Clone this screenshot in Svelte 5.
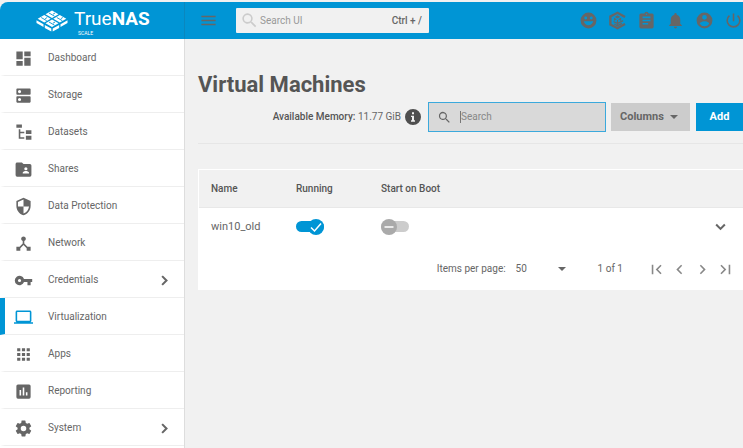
<script>
  const menu = [
    {
      name: 'Dashboard',
      icon: 'M13 3v6h8V3m-8 18h8V11h-8M3 21h8v-6H3m0-2h8V3H3v10z'
    },
    {
      name: 'Storage',
      icon: 'M20 13H4c-.55 0-1 .45-1 1v6c0 .55.45 1 1 1h16c.55 0 1-.45 1-1v-6c0-.55-.45-1-1-1zM7 19a2 2 0 1 1 0-4 2 2 0 0 1 0 4zM20 3H4c-.55 0-1 .45-1 1v6c0 .55.45 1 1 1h16c.55 0 1-.45 1-1V4c0-.55-.45-1-1-1zM7 9a2 2 0 1 1 0-4 2 2 0 0 1 0 4z'
    },
    {
      name: 'Datasets',
      icon: 'M3 2h7v4H3V2m12 7h7v5h-7V9m0 7h7v5h-7v-5m-2-3H8v5h5v2H6V8h2v3h5v2z'
    },
    {
      name: 'Shares',
      icon: 'M20 5h-8l-2-2H4c-1.100 0-2 .9-2 2v14a2 2 0 0 0 2 2h16a2 2 0 0 0 2-2V7a2 2 0 0 0-2-2zm-5 4a2 2 0 1 1 0 4 2 2 0 0 1 0-4zm4 8h-8v-1c0-1.330 2.670-2 4-2s4 .67 4 2v1z'
    },
    {
      name: 'Data Protection',
      icon: 'M12 1L3 5v6c0 5.550 3.840 10.740 9 12 5.160-1.260 9-6.450 9-12V5l-9-4zm0 10.990h7c-.53 4.120-3.280 7.790-7 8.940V12H5V6.300l7-3.110v8.800z'
    },
    {
      name: 'Network',
      icon: 'M17 16l-4-4V8.820A3 3 0 0 0 12 3a3 3 0 0 0-1 5.820V12l-4 4H3v5h5v-3.050l4-4.200 4 4.200V21h5v-5h-4z'
    },
    {
      name: 'Credentials',
      icon: 'M12.650 10A6 6 0 1 0 12.650 14H17v4h4v-4h2v-4H12.650zM7 14a2 2 0 1 1 0-4 2 2 0 0 1 0 4z',
      children: true
    },
    {
      name: 'Virtualization',
      icon: 'M20 18c1.100 0 1.990-.9 1.990-2L22 5c0-1.100-.9-2-2-2H4c-1.100 0-2 .9-2 2v11c0 1.100.9 2 2 2H0v2h24v-2h-4zM4 5h16v11H4V5z',
      active: true
    },
    {
      name: 'Apps',
      icon: 'M4 8h4V4H4v4zm6 12h4v-4h-4v4zm-6 0h4v-4H4v4zm0-6h4v-4H4v4zm6 0h4v-4h-4v4zm6-10v4h4V4h-4zm-6 4h4V4h-4v4zm6 6h4v-4h-4v4zm0 6h4v-4h-4v4z'
    },
    {
      name: 'Reporting',
      icon: 'M19 3H5a2 2 0 0 0-2 2v14a2 2 0 0 0 2 2h14a2 2 0 0 0 2-2V5a2 2 0 0 0-2-2zM9 17H7v-7h2v7zm4 0h-2V7h2v10zm4 0h-2v-4h2v4z'
    },
    {
      name: 'System',
      icon: 'M19.430 12.980c.04-.32.07-.64.07-.98s-.03-.66-.07-.98l2.110-1.650c.19-.15.24-.42.12-.64l-2-3.460c-.12-.22-.39-.3-.61-.22l-2.490 1c-.52-.4-1.080-.73-1.690-.98l-.38-2.650A.49.49 0 0 0 14 2h-4c-.25 0-.46.18-.49.42l-.38 2.650c-.61.25-1.170.59-1.690.98l-2.490-1c-.23-.09-.49 0-.61.22l-2 3.460c-.13.22-.07.49.12.64l2.110 1.650c-.04.32-.07.65-.07.98s.03.66.07.98l-2.110 1.650c-.19.15-.24.42-.12.64l2 3.460c.12.22.39.3.61.22l2.490-1c.52.4 1.080.73 1.690.98l.38 2.650c.03.24.24.42.49.42h4c.25 0 .46-.18.49-.42l.38-2.650c.61-.25 1.170-.59 1.690-.98l2.490 1c.23.09.49 0 .61-.22l2-3.460c.12-.22.07-.49-.12-.64l-2.110-1.650zM12 15.500a3.500 3.500 0 1 1 0-7 3.500 3.500 0 0 1 0 7z',
      children: true
    }
  ];

  const pager = [
    {label: 'First page', icon: 'M18.410 16.590L13.820 12l4.590-4.590L17 6l-6 6 6 6zM6 6h2v12H6z'},
    {label: 'Previous page', icon: 'M15.410 7.410L14 6l-6 6 6 6 1.410-1.410L10.830 12z'},
    {label: 'Next page', icon: 'M10 6L8.590 7.410 13.170 12l-4.580 4.590L10 18l6-6z'},
    {label: 'Last page', icon: 'M5.590 7.410L10.180 12l-4.590 4.590L7 18l6-6-6-6zM16 6h2v12h-2z'}
  ];

  let machines = $state([{name: 'win10_old', running: true, autostart: false}]);
  let filter = $state('');
  let pageSize = $state('50');
</script>

<div class="app">
  <header class="topbar">
    <a class="brand" href="#dashboard" aria-label="TrueNAS Scale">
      <svg class="logo" viewBox="0 0 32 22">
        <path class="tile" d="M16 .5l6.500 3.700L16 7.900 9.500 4.200zM8.200 5l6.500 3.700-6.500 3.700-6.500-3.700zM23.800 5l6.500 3.700-6.500 3.700-6.500-3.700zM16 9.500l6.500 3.700-6.500 3.700-6.500-3.700z" />
        <path class="cut" d="M13 3l5.500 3.200M19 3l-2 1.200M5.200 7.500l5.500 3.200M11.200 7.500l-2 1.200M20.800 7.500l5.500 3.200M26.800 7.500l-2 1.200M13 12l5.500 3.200M19 12l-2 1.200" />
        <path class="tile" d="M.5 10.200l7 4v2.900l-7-4zM8.800 15l6.500 3.600v3L8.800 17.900zM31.500 10.200l-7 4v2.900l7-4zM23.200 15l-6.500 3.600v3l6.500-3.700z" />
      </svg>
      <span class="wordmark">
        <span class="product">True<b>NAS</b></span>
        <small>SCALE</small>
      </span>
    </a>
    <div class="tools">
      <button class="icon-btn" aria-label="Toggle menu">
        <svg viewBox="0 0 24 24"><path d="M3 18h18v-2H3v2zm0-5h18v-2H3v2zm0-7v2h18V6H3z" /></svg>
      </button>
      <label class="ui-search">
        <svg viewBox="0 0 24 24"><path d="M15.500 14h-.79l-.28-.27A6.500 6.500 0 1 0 13.730 14.430l.27.28v.79l5 4.990L20.490 19l-4.990-5zm-6 0a4.500 4.500 0 1 1 0-9 4.500 4.500 0 0 1 0 9z" /></svg>
        <input type="text" placeholder="Search UI" aria-label="Search UI">
        <kbd>Ctrl + /</kbd>
      </label>
      <div class="actions">
        <button class="icon-btn" aria-label="Feedback">
          <svg viewBox="0 0 24 24"><path fill-rule="evenodd" d="M12 2a10 10 0 1 0 0 20 10 10 0 0 0 0-20zM8.500 7a1.800 1.800 0 1 1 0 3.600 1.800 1.800 0 0 1 0-3.600zm7 0a1.800 1.800 0 1 1 0 3.600 1.800 1.800 0 0 1 0-3.600zM6 13h12c-.7 3-3 5-6 5s-5.300-2-6-5z" /></svg>
        </button>
        <button class="icon-btn" aria-label="TrueCommand">
          <svg viewBox="0 0 24 24">
            <path class="line thick" d="M21.500 7.500L12 2.200 3 7v10l9 4.800 9.500-5.300" />
            <path d="M12 5.500l3.500 2L12 9.500l-3.500-2zM7.500 8.500l3.700 2-3.700 2V8.500zM16.500 8.500l-3.700 2 3.700 2V8.500z" />
            <path class="line" d="M7 13.200l5 2.700 7-3.700M8 16.500l4 2.200 5.500-3M12 11.500v7" />
          </svg>
        </button>
        <button class="icon-btn" aria-label="Jobs">
          <svg viewBox="0 0 24 24"><path fill-rule="evenodd" d="M19 3h-4.180a3 3 0 0 0-5.640 0H5a2 2 0 0 0-2 2v15a2 2 0 0 0 2 2h14a2 2 0 0 0 2-2V5a2 2 0 0 0-2-2zm-7 0a1 1 0 1 1 0 2 1 1 0 0 1 0-2zM7 7h10v2H7zm0 4h10v2H7zm0 4h7v2H7z" /></svg>
        </button>
        <button class="icon-btn" aria-label="Alerts">
          <svg viewBox="0 0 24 24"><path d="M12 22c1.100 0 2-.9 2-2h-4a2 2 0 0 0 2 2zm6-6v-5c0-3.070-1.640-5.640-4.500-6.320V4a1.500 1.500 0 0 0-3 0v.68C7.630 5.360 6 7.920 6 11v5l-2 2v1h16v-1l-2-2z" /></svg>
        </button>
        <button class="icon-btn" aria-label="Account">
          <svg viewBox="0 0 24 24"><path fill-rule="evenodd" d="M12 2a10 10 0 1 0 0 20 10 10 0 0 0 0-20zm0 3a3 3 0 1 1 0 6 3 3 0 0 1 0-6zm0 14.200a7.200 7.200 0 0 1-6-3.220c.03-1.990 4-3.080 6-3.080s5.970 1.090 6 3.080a7.200 7.200 0 0 1-6 3.220z" /></svg>
        </button>
        <button class="icon-btn" aria-label="Power">
          <svg viewBox="0 0 24 24"><path d="M13 3h-2v10h2V3zm4.830 2.170l-1.420 1.420A7 7 0 1 1 7.580 6.580L6.170 5.170a9 9 0 1 0 11.660 0z" /></svg>
        </button>
      </div>
    </div>
  </header>

  <div class="body">
    <nav class="sidebar">
      {#each menu as item}
        <a class="nav-item" class:active={item.active} href="#{item.name}">
          <svg class="nav-icon" viewBox="0 0 24 24"><path d={item.icon} /></svg>
          <span>{item.name}</span>
          {#if item.children}
            <svg class="more" viewBox="0 0 24 24"><path class="line chevron" d="M9 6.500l5.500 5.500L9 17.500" /></svg>
          {/if}
        </a>
      {/each}
    </nav>

    <main>
      <h1>Virtual Machines</h1>
      <div class="toolbar">
        <p class="memory"><b>Available Memory:</b> <span>11.77 GiB</span></p>
        <button class="info" aria-label="Memory help">
          <svg viewBox="0 0 24 24"><path fill-rule="evenodd" d="M12 0a12 12 0 1 0 0 24 12 12 0 0 0 0-24zM10.500 5h3v3h-3zM9 10h4.500v7H15v2H9v-2h1.500v-5H9z" /></svg>
        </button>
        <label class="filter">
          <svg viewBox="0 0 24 24"><path d="M15.500 14h-.79l-.28-.27A6.500 6.500 0 1 0 13.730 14.430l.27.28v.79l5 4.990L20.490 19l-4.990-5zm-6 0a4.500 4.500 0 1 1 0-9 4.500 4.500 0 0 1 0 9z" /></svg>
          <input type="text" placeholder="Search" aria-label="Search" bind:value={filter}>
        </label>
        <button class="btn columns">Columns <span class="caret"></span></button>
        <button class="btn add">Add</button>
      </div>

      <section class="card">
        <table>
          <thead>
            <tr>
              <th class="col">Name</th>
              <th class="col">Running</th>
              <th>Start on Boot</th>
              <th class="expand"></th>
            </tr>
          </thead>
          <tbody>
            {#each machines as vm}
              <tr>
                <td>{vm.name}</td>
                <td>
                  <label class="toggle">
                    <input type="checkbox" aria-label="Running" bind:checked={vm.running}>
                    <span class="knob">
                      <svg viewBox="0 0 16 16"><path d={vm.running ? 'M3 8.500l3.500 3.500L13 4.500' : 'M3.500 8h9'} /></svg>
                    </span>
                  </label>
                </td>
                <td>
                  <label class="toggle">
                    <input type="checkbox" aria-label="Start on Boot" bind:checked={vm.autostart}>
                    <span class="knob">
                      <svg viewBox="0 0 16 16"><path d={vm.autostart ? 'M3 8.500l3.500 3.500L13 4.500' : 'M3.500 8h9'} /></svg>
                    </span>
                  </label>
                </td>
                <td class="expand">
                  <button class="icon-btn" aria-label="Show details">
                    <svg viewBox="0 0 24 24"><path class="line chevron" d="M6.500 9.500L12 15l5.500-5.500" /></svg>
                  </button>
                </td>
              </tr>
            {/each}
          </tbody>
        </table>
        <footer class="paginator">
          <label for="page-size">Items per page:</label>
          <div class="size">
            <select id="page-size" bind:value={pageSize}>
              <option>10</option>
              <option>50</option>
              <option>100</option>
            </select>
            <span class="caret"></span>
          </div>
          <span class="range">1 of 1</span>
          <div class="pages">
            {#each pager as page}
              <button class="icon-btn" aria-label={page.label}>
                <svg viewBox="0 0 24 24"><path d={page.icon} /></svg>
              </button>
            {/each}
          </div>
        </footer>
      </section>
    </main>
  </div>
</div>

<style>
  :global(body) {
    background: #f1f1f1;
  }

  .app {
    --blue: #0095d5;
    --fg: #666;
    display: flex;
    flex-direction: column;
    min-height: 100vh;
    box-sizing: border-box;
    padding-top: 2px;
    color: var(--fg);
    font-family: Roboto, "Noto Sans", sans-serif;
    font-size: 10px;
    line-height: 16px;
  }

  svg {
    display: block;
    flex: none;
    fill: currentColor;
  }

  button, input, select {
    margin: 0;
    padding: 0;
    border: 0;
    border-radius: 0;
    outline: 0;
    background: none;
    color: inherit;
    font: inherit;
  }

  button {
    display: block;
    cursor: pointer;
  }

  .topbar {
    display: flex;
    height: 37px;
    background: var(--blue);
    border-top-left-radius: 8px;
  }

  .brand {
    display: flex;
    align-items: center;
    gap: 6px;
    flex: none;
    width: 185px;
    box-sizing: border-box;
    padding-left: 36px;
    border-right: 1px solid #0a87be;
    color: #fff;
    text-decoration: none;
  }

  .logo {
    width: 32px;
    height: 22px;
  }

  .logo .cut {
    fill: none;
    stroke: var(--blue);
    stroke-width: .9;
  }

  .wordmark {
    display: flex;
    flex-direction: column;
    padding-top: 2px;
  }

  .product {
    font-size: 19px;
    line-height: 22px;
  }

  .wordmark small {
    padding-left: 4px;
    font-size: 5px;
    line-height: 6px;
  }

  .tools {
    display: flex;
    align-items: center;
    flex: 1;
    padding-left: 14px;
  }

  .icon-btn svg {
    width: 19px;
    height: 19px;
  }

  .ui-search {
    display: flex;
    align-items: center;
    width: 193px;
    height: 25px;
    margin-left: 18px;
    padding: 0 7px 0 4px;
    box-sizing: border-box;
    border-radius: 1px;
    background: #f1f1f1;
  }

  .ui-search svg {
    width: 19px;
    height: 19px;
    color: #ccc;
  }

  .ui-search input {
    flex: 1;
    min-width: 0;
    margin-left: 1px;
  }

  .ui-search input::placeholder {
    color: #999;
    opacity: 1;
  }

  kbd {
    font: 500 10px/16px Roboto, sans-serif;
  }

  .actions {
    display: flex;
    align-items: center;
    gap: 10px;
    margin-left: auto;
  }

  .line {
    fill: none;
    stroke: currentColor;
    stroke-width: 1.600;
  }

  .line.thick {
    stroke-width: 3;
  }

  .line.chevron {
    stroke-width: 2.600;
  }

  .body {
    display: flex;
    flex: 1;
  }

  .sidebar {
    flex: none;
    width: 185px;
    box-sizing: border-box;
    border-right: 1px solid #ddd;
    background: #fff;
  }

  .nav-item {
    display: flex;
    align-items: center;
    height: 37px;
    box-sizing: border-box;
    padding: 2px 10px 0 9px;
    border-left: 5px solid transparent;
    border-bottom: 1px solid #eee;
    color: var(--fg);
    text-decoration: none;
  }

  .nav-item span {
    flex: 1;
    margin-left: 15px;
  }

  .nav-icon,
  .more {
    width: 19px;
    height: 19px;
  }

  .active {
    border-left-color: var(--blue);
  }

  .active .nav-icon {
    color: var(--blue);
  }

  main {
    flex: 1;
    min-width: 0;
    padding: 28px 0 0 13px;
  }

  h1 {
    margin: 0;
    color: #555;
    font: 700 22px/35px Roboto, sans-serif;
  }

  .toolbar {
    display: flex;
    align-items: center;
    justify-content: flex-end;
    padding-bottom: 11px;
    border-bottom: 1px solid #e6e6e6;
  }

  .memory {
    margin: 0;
  }

  .memory b {
    color: #555;
    font-weight: 500;
  }

  .info svg {
    width: 16px;
    height: 16px;
    margin: 0 7px 0 4px;
    color: #4f4f4f;
  }

  .filter {
    display: flex;
    align-items: center;
    width: 178px;
    height: 30px;
    box-sizing: border-box;
    padding: 0 8px;
    border: 1px solid #3ba9dc;
    background: #d9d9d9;
  }

  .filter svg {
    width: 15px;
    height: 15px;
  }

  .filter input {
    flex: 1;
    min-width: 0;
    height: 12px;
    margin-left: 8px;
    border-left: 1px solid #777;
  }

  .filter input::placeholder {
    color: #888;
    opacity: 1;
  }

  .btn {
    height: 28px;
    font-weight: 700;
    font-size: 11px;
  }

  .columns {
    display: flex;
    align-items: center;
    justify-content: space-between;
    width: 79px;
    margin: 0 6px 0 5px;
    padding: 0 12px 0 9px;
    background: #ccc;
  }

  .add {
    width: 47px;
    background: var(--blue);
    color: #fff;
  }

  .caret {
    border: 4px solid transparent;
    border-top-color: currentColor;
    border-bottom: 0;
  }

  .card {
    margin-top: 25px;
    border: 1px solid #fff;
    border-right: 0;
    background: #fff;
  }

  table {
    width: 100%;
    border-collapse: collapse;
  }

  th {
    height: 37px;
    padding: 0 0 0 12px;
    border-bottom: 1px solid #e8e8e8;
    background: #f1f1f1;
    color: #555;
    font-weight: 500;
    text-align: left;
  }

  td {
    height: 37px;
    padding: 0 0 0 12px;
    font-size: 11px;
  }

  .col {
    width: 73px;
  }

  .expand {
    width: 32px;
  }

  .toggle {
    position: relative;
    display: flex;
    align-items: center;
    width: 28px;
    height: 16px;
  }

  .toggle input {
    appearance: none;
    width: 28px;
    height: 11px;
    border-radius: 6px;
    background: #ccc;
  }

  .toggle input:checked {
    background: var(--blue);
  }

  .knob {
    position: absolute;
    left: 0;
    width: 16px;
    height: 16px;
    border-radius: 50%;
    background: #aaa;
  }

  .knob path {
    fill: none;
    stroke: #fff;
    stroke-width: 1.500;
  }

  input:checked + .knob {
    left: auto;
    right: 0;
    background: var(--blue);
  }

  .paginator {
    display: flex;
    align-items: center;
    justify-content: flex-end;
    height: 40px;
    padding: 4px 8px 0 0;
  }

  .size {
    display: flex;
    align-items: center;
    width: 50px;
    margin-left: 10px;
  }

  .size select {
    flex: 1;
    appearance: none;
  }

  .range {
    margin: 0 24px 0 32px;
  }

  .pages {
    display: flex;
    gap: 4px;
    color: #888;
  }
</style>
